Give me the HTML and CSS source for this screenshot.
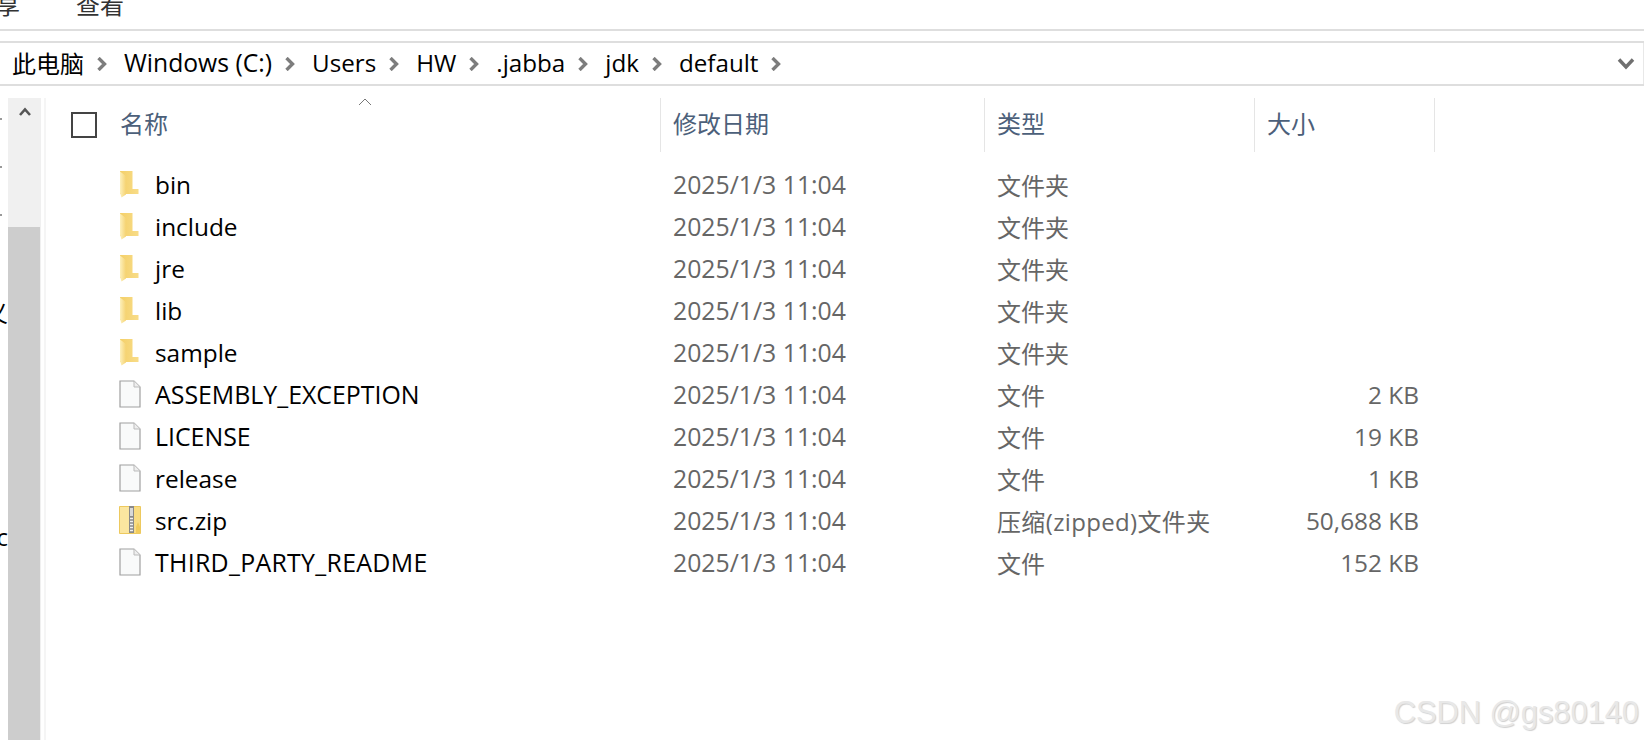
FILE: index.html
```html
<!DOCTYPE html>
<html lang="en">
<head>
  <meta charset="UTF-8" />
  <title>default</title>
  <link rel="stylesheet" href="styles.css">
</head>
<body>
  <svg width="0" height="0" class="defs">
    <defs>
      <linearGradient id="folder-grad" x1="0" y1="0" x2="1" y2="0">
        <stop offset="0" stop-color="#fdf0bc" />
        <stop offset="1" stop-color="#f5d372" />
      </linearGradient>
      <linearGradient id="folder-back" x1="0" y1="0" x2="1" y2="0">
        <stop offset="0" stop-color="#f4d069" />
        <stop offset="1" stop-color="#f8dc88" />
      </linearGradient>
      <symbol id="folder" viewBox="0 0 20 28">
        <path d="M1 1H13.5V19H19.5V24H1Z" fill="url(#folder-back)" />
        <path d="M1 1.5L7 6V24.5L2.5 27.5L1 23Z" fill="url(#folder-grad)" />
      </symbol>
      <symbol id="file" viewBox="0 0 22 28">
        <path d="M1 1H15L21 7V27H1Z" fill="#f9fafa" stroke="#a0a0a0" stroke-width="1.2" />
        <path d="M15 1V7H21" fill="#eee" stroke="#bbb" stroke-width="1" />
      </symbol>
      <symbol id="zip" viewBox="0 0 22 28">
        <path d="M.5 .5H21.5V27.5H.5Z" fill="#f9dc82" stroke="#edc95e" />
        <path d="M1 1H10V27H1Z" fill="#fbe6a0" />
        <rect x="10" y="0" width="5" height="27" fill="#8a8a8a" />
        <rect x="11" y="2" width="3" height="8" fill="#d8d8d8" />
        <path d="M11 12.5H14M11 15.5H14M11 18.5H14M11 21.5H14M11 24.5H14" stroke="#f0f0f0" stroke-width="1.4" />
        <path d="M17 21L19 16L21 21V27H17Z" fill="#f2cc5c" />
      </symbol>
      <symbol id="crumb" viewBox="0 0 10 14">
        <path d="M1.5 1L7.5 7L1.5 13" fill="none" stroke="#7d7d7d" stroke-width="3.4" />
      </symbol>
    </defs>
  </svg>

  <div class="menubar">
    <span>共享</span>
    <span>查看</span>
  </div>

  <div class="addressbar">
    <div class="crumbs">
      <span class="crumb-cjk">此电脑</span><svg class="crumb-sep"><use href="#crumb" /></svg>
      <span class="crumb-wide">Windows (C:)</span><svg class="crumb-sep"><use href="#crumb" /></svg>
      <span>Users</span><svg class="crumb-sep"><use href="#crumb" /></svg>
      <span>HW</span><svg class="crumb-sep"><use href="#crumb" /></svg>
      <span>.jabba</span><svg class="crumb-sep"><use href="#crumb" /></svg>
      <span>jdk</span><svg class="crumb-sep"><use href="#crumb" /></svg>
      <span>default</span><svg class="crumb-sep"><use href="#crumb" /></svg>
    </div>
    <div class="history">
      <svg width="18" height="12" viewBox="0 0 18 12"><path d="M2 1.5L9 9L16 1.5" fill="none" stroke="#6f6f6f" stroke-width="3.4" /></svg>
    </div>
  </div>

  <div class="main">
    <div class="nav">
      <i class="nav-tick"></i>
      <i class="nav-tick"></i>
      <i class="nav-tick"></i>
      <span class="nav-text nav-text-1">义</span>
      <span class="nav-text nav-text-2">c</span>
    </div>
    <div class="scrollbar">
      <div class="scroll-up">
        <svg width="12" height="9" viewBox="0 0 12 9"><path d="M1 8L6 2.5L11 8" fill="none" stroke="#555" stroke-width="2.6" /></svg>
      </div>
      <div class="scroll-thumb"></div>
    </div>

    <div class="files">
      <div class="file-head">
        <div class="col col-name">
          <span class="checkbox"></span>
          <span>名称</span>
          <svg class="sort" width="14" height="8" viewBox="0 0 14 8"><path d="M1 7L7 1L13 7" fill="none" stroke="#777" stroke-width="1" /></svg>
        </div>
        <div class="col col-date">修改日期</div>
        <div class="col col-type">类型</div>
        <div class="col col-size">大小</div>
      </div>

      <div class="row">
        <div class="name"><svg class="ico-folder"><use href="#folder" /></svg>bin</div>
        <div class="date">2025/1/3 11:04</div><div class="type">文件夹</div><div class="size"></div>
      </div>
      <div class="row">
        <div class="name"><svg class="ico-folder"><use href="#folder" /></svg>include</div>
        <div class="date">2025/1/3 11:04</div><div class="type">文件夹</div><div class="size"></div>
      </div>
      <div class="row">
        <div class="name"><svg class="ico-folder"><use href="#folder" /></svg>jre</div>
        <div class="date">2025/1/3 11:04</div><div class="type">文件夹</div><div class="size"></div>
      </div>
      <div class="row">
        <div class="name"><svg class="ico-folder"><use href="#folder" /></svg>lib</div>
        <div class="date">2025/1/3 11:04</div><div class="type">文件夹</div><div class="size"></div>
      </div>
      <div class="row">
        <div class="name"><svg class="ico-folder"><use href="#folder" /></svg>sample</div>
        <div class="date">2025/1/3 11:04</div><div class="type">文件夹</div><div class="size"></div>
      </div>
      <div class="row">
        <div class="name name-caps"><svg class="ico-file"><use href="#file" /></svg>ASSEMBLY_EXCEPTION</div>
        <div class="date">2025/1/3 11:04</div><div class="type">文件</div><div class="size">2 KB</div>
      </div>
      <div class="row">
        <div class="name name-caps"><svg class="ico-file"><use href="#file" /></svg>LICENSE</div>
        <div class="date">2025/1/3 11:04</div><div class="type">文件</div><div class="size">19 KB</div>
      </div>
      <div class="row">
        <div class="name"><svg class="ico-file"><use href="#file" /></svg>release</div>
        <div class="date">2025/1/3 11:04</div><div class="type">文件</div><div class="size">1 KB</div>
      </div>
      <div class="row">
        <div class="name"><svg class="ico-file"><use href="#zip" /></svg>src.zip</div>
        <div class="date">2025/1/3 11:04</div><div class="type type-zip">压缩(zipped)文件夹</div><div class="size">50,688 KB</div>
      </div>
      <div class="row">
        <div class="name name-caps name-wide"><svg class="ico-file"><use href="#file" /></svg>THIRD_PARTY_README</div>
        <div class="date">2025/1/3 11:04</div><div class="type">文件</div><div class="size">152 KB</div>
      </div>
    </div>
  </div>

  <div class="watermark">CSDN @gs80140</div>
</body>
</html>
```

FILE: styles.css
```css
html, body {
  height: 100%;
}

body {
  margin: 0;
  background: #ffffff;
  color: #000000;
  font-family: "Open Sans", "Noto Sans CJK SC", sans-serif;
  font-size: 24px;
  overflow: hidden;
  position: relative;
}

.defs {
  position: absolute;
}

.menubar {
  height: 29px;
  border-bottom: 2px solid #dedede;
  display: flex;
  gap: 56px;
  margin-left: -28px;
  overflow: hidden;
  line-height: 24px;
  color: #333;
}

.menubar span {
  margin-top: -7px;
}

.addressbar {
  margin-top: 10px;
  height: 41px;
  border-top: 2px solid #dedede;
  border-bottom: 2px solid #dedede;
  display: flex;
  justify-content: space-between;
  align-items: center;
}

.crumbs {
  display: flex;
  align-items: center;
  padding: 0 0 2px 12px;
  font-size: 24.2px;
}

.crumb-cjk {
  font-size: 24px;
}

.crumb-wide {
  font-size: 24.7px;
}

.crumb-sep {
  width: 10px;
  height: 14px;
  margin: 2px 17px 0 13px;
}

.history {
  width: 34px;
  height: 100%;
  box-sizing: border-box;
  border-right: 1px solid #e8e8e8;
  display: flex;
  align-items: center;
  padding-left: 7px;
}

.main {
  display: flex;
  margin-top: 12px;
  height: 643px;
}

.nav {
  width: 8px;
  position: relative;
  overflow: hidden;
}

.nav-tick {
  display: block;
  width: 2px;
  height: 2px;
  background: #999;
  margin-top: 46px;
}

.nav-tick:first-child {
  margin-top: 20px;
}

.nav-text {
  position: absolute;
  right: 0;
  line-height: 30px;
}

.nav-text-1 {
  top: 200px;
}

.nav-text-2 {
  top: 424px;
}

.scrollbar {
  width: 33px;
  background: #f0f0f0;
  display: flex;
  flex-direction: column;
}

.scroll-up {
  height: 129px;
  display: flex;
  justify-content: center;
  padding-top: 9px;
  box-sizing: border-box;
}

.scroll-thumb {
  flex: 1;
  background: #cdcdcd;
  margin-right: 1px;
}

.files {
  margin-left: 3px;
  border-left: 2px solid #f5f5f5;
  flex: 1;
}

.file-head {
  display: grid;
  grid-template-columns: 615px 324px 270px 180px;
  height: 54px;
  margin-bottom: 11px;
  color: #4c607a;
}

.col {
  border-right: 1px solid #e5e5e5;
  display: flex;
  align-items: center;
  padding: 0 0 5px 12px;
  position: relative;
}

.col-name {
  padding-left: 25px;
}

.checkbox {
  width: 22px;
  height: 22px;
  border: 2px solid #444;
  margin: 5px 23px 0 0;
}

.sort {
  position: absolute;
  left: 312px;
  top: 0;
}

.row {
  display: grid;
  grid-template-columns: 615px 324px 270px 180px;
  height: 42px;
  align-items: center;
  color: #666666;
  white-space: nowrap;
}

.name {
  color: #000000;
  display: flex;
  align-items: center;
  padding-left: 73px;
  font-size: 24.4px;
}

.name-caps {
  font-size: 24.9px;
}

.name-wide {
  letter-spacing: .3px;
}

.ico-folder {
  width: 20px;
  height: 28px;
  margin-right: 16px;
}

.ico-file {
  width: 22px;
  height: 28px;
  margin-right: 14px;
}

.date {
  padding-left: 12px;
  font-size: 24.8px;
}

.type {
  padding-left: 12px;
}

.type-zip {
  letter-spacing: .35px;
}

.size {
  text-align: right;
  padding-right: 16px;
  font-size: 24.4px;
}

.watermark {
  position: absolute;
  right: 5px;
  bottom: 9px;
  font-family: "Liberation Sans", sans-serif;
  font-size: 30.8px;
  line-height: 36px;
  color: #e8e8e8;
  text-shadow: 1px 1px 1px #d0d0d0;
  white-space: nowrap;
}
```
